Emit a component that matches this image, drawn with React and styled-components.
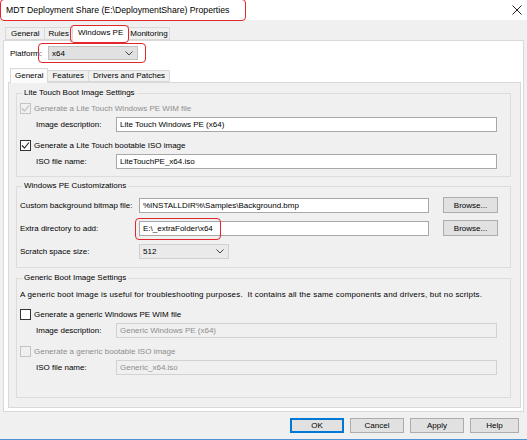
import React from 'react';
import styled, { createGlobalStyle } from 'styled-components';

const GlobalStyle = createGlobalStyle`
  html, body { margin: 0; padding: 0; background: #f0f0f0; }
  body { font-family: "Liberation Sans", Arial, sans-serif; font-size: 8px; color: #000; }
  * { box-sizing: border-box; }
`;

const Window = styled.div`
  width: 527px;
  height: 440px;
  background: #f0f0f0;
  display: flex;
  flex-direction: column;
  border-bottom: 1px solid #4d94d4;
  overflow: hidden;
`;

const TitleBar = styled.div`
  height: 20px;
  flex-shrink: 0;
  background: #fff;
  display: flex;
  align-items: center;
  justify-content: space-between;
  padding: 0 5px 0 6px;
`;

const Title = styled.span`
  font-size: 8.7px;
  line-height: 12px;
`;

const Highlight = styled.span`
  position: relative;
  display: inline-flex;
  align-items: center;
  &::after {
    content: '';
    position: absolute;
    top: ${p => p.$t}px;
    right: ${p => p.$r}px;
    bottom: ${p => p.$b}px;
    left: ${p => p.$l}px;
    border: 1.6px solid #e3262b;
    border-radius: 4px;
    pointer-events: none;
    z-index: 5;
  }
`;

const TabStrip = styled.div`
  display: flex;
  align-items: flex-end;
  height: ${p => p.$h}px;
  padding-left: ${p => p.$pl}px;
  position: relative;
  z-index: 2;
  flex-shrink: 0;
`;

const Tab = styled.div`
  height: ${p => (p.$active ? p.$h + 3 : p.$h)}px;
  margin-bottom: ${p => (p.$active ? -1 : 0)}px;
  padding: 0 ${p => p.$px}px;
  display: flex;
  align-items: center;
  justify-content: center;
  background: ${p => (p.$active ? p.$activeBg : '#f0f0f0')};
  border: 1px solid #d9d9d9;
  border-bottom: ${p => (p.$active ? 'none' : '1px solid #d9d9d9')};
  margin-left: -1px;
  white-space: nowrap;
  line-height: 10px;
  padding-bottom: ${p => (p.$active ? 1 : 0)}px;
  position: relative;
  z-index: ${p => (p.$active ? 3 : 1)};
  &:first-child { margin-left: 0; }
`;

const Page = styled.div`
  margin: 0 3px 0 3px;
  height: 372px;
  background: #fff;
  border: 1px solid #d9d9d9;
  display: flex;
  flex-direction: column;
  flex-shrink: 0;
`;

const PlatformRow = styled.div`
  display: flex;
  align-items: center;
  margin-top: 5px;
  padding-left: 6px;
  height: 14px;
`;

const PlatformLabel = styled.span`
  width: 38px;
  white-space: nowrap;
  overflow: hidden;
`;

const Combo = styled.div`
  width: ${p => p.$w}px;
  height: ${p => p.$h}px;
  background: ${p => p.$bg};
  border: 1px solid ${p => p.$bd};
  display: flex;
  align-items: center;
  justify-content: space-between;
  padding: 0 4px 0 3px;
`;

const InnerTabs = styled.div`
  margin: 8px 2px 3px 4px;
  flex: 1;
  display: flex;
  flex-direction: column;
`;

const InnerPanel = styled.div`
  flex: 1;
  background: #f0f0f0;
  border: 1px solid #d9d9d9;
  padding: 5px 9px 7px 7px;
  display: flex;
  flex-direction: column;
  gap: ${p => p.$gap}px;
`;

const Group = styled.fieldset`
  margin: 0;
  margin-top: ${p => p.$mt || 0}px;
  border: 1px solid #dcdcdc;
  padding: ${p => p.$pt}px 13px ${p => p.$pb}px 3px;
  min-width: 0;
  display: flex;
  flex-direction: column;
`;

const Legend = styled.legend`
  padding: 0 2px;
  margin-left: 2px;
  line-height: 10px;
  height: 10px;
`;

const Row = styled.div`
  display: flex;
  align-items: center;
  height: ${p => p.$h}px;
  margin-top: ${p => p.$mt || 0}px;
  padding-left: ${p => p.$indent || 0}px;
  color: ${p => (p.$disabled ? '#8d8d8d' : '#000')};
  white-space: nowrap;
`;

const Label = styled.span`
  width: ${p => p.$w}px;
  flex-shrink: 0;
`;

const TextBox = styled.div`
  flex: ${p => (p.$w ? '0 0 auto' : 1)};
  width: ${p => (p.$w ? `${p.$w}px` : 'auto')};
  height: 15px;
  background: ${p => (p.$disabled ? '#f0f0f0' : '#fff')};
  border: 1px solid ${p => (p.$disabled ? '#d2d2d2' : '#a8a8a8')};
  color: ${p => (p.$disabled ? '#8d8d8d' : '#000')};
  padding-left: 3px;
  display: flex;
  align-items: center;
  white-space: nowrap;
  overflow: hidden;
`;

const CheckBox = styled.span`
  width: 11px;
  height: 11px;
  flex-shrink: 0;
  border: 1px solid ${p => (p.$disabled ? '#c4c4c4' : '#333')};
  background: ${p => (p.$disabled ? '#f0f0f0' : '#fff')};
  margin-right: 3px;
  display: flex;
  align-items: center;
  justify-content: center;
`;

const Button = styled.div`
  width: ${p => p.$w}px;
  height: ${p => p.$h}px;
  background: #e1e1e1;
  border: 1px solid ${p => (p.$default ? '#0078d7' : '#adadad')};
  box-shadow: ${p => (p.$default ? 'inset 0 0 0 1px #0078d7' : 'none')};
  display: flex;
  align-items: center;
  justify-content: center;
  flex-shrink: 0;
`;

const BrowseButton = styled(Button)`
  margin-left: 14px;
`;

const ButtonRow = styled.div`
  display: flex;
  justify-content: flex-end;
  gap: 6px;
  margin-top: 6px;
  padding-right: 8px;
`;

const Description = styled.div`
  height: 12px;
  line-height: 12px;
  white-space: nowrap;
  letter-spacing: 0.17px;
`;

const Chevron = () => (
  <svg width="8" height="5" viewBox="0 0 8 5">
    <polyline points="0.5,0.5 4,4 7.5,0.5" fill="none" stroke="#444" strokeWidth="1" />
  </svg>
);

const CloseIcon = () => (
  <svg width="10" height="10" viewBox="0 0 10 10">
    <path d="M0.5 0.5 L9.5 9.5 M9.5 0.5 L0.5 9.5" stroke="#222" strokeWidth="1" />
  </svg>
);

const Check = ({ color }) => (
  <svg width="9" height="9" viewBox="0 0 9 9">
    <polyline points="1,4.5 3.5,7 8,1.5" fill="none" stroke={color} strokeWidth="1.1" />
  </svg>
);

const Checkbox = ({ checked, disabled, children }) => (
  <>
    <CheckBox $disabled={disabled}>{checked && <Check color={disabled ? '#b8b8b8' : '#222'} />}</CheckBox>
    {children}
  </>
);

export default function App() {
  return (
    <>
      <GlobalStyle />
      <Window>
        <TitleBar>
          <Highlight $t={-5} $r={-17} $b={-5} $l={-6}>
            <Title>MDT Deployment Share (E:\DeploymentShare) Properties</Title>
          </Highlight>
          <CloseIcon />
        </TitleBar>

        <TabStrip $h={20} $pl={5}>
          <Tab $h={13} $px={5} $activeBg="#fff">General</Tab>
          <Tab $h={13} $px={3} $activeBg="#fff">Rules</Tab>
          <Tab $h={13} $px={5} $active $activeBg="#fff">
            <Highlight $t={-3} $r={-6} $b={-5} $l={-8}>Windows PE</Highlight>
          </Tab>
          <Tab $h={13} $px={1} $activeBg="#fff">Monitoring</Tab>
        </TabStrip>

        <Page>
          <PlatformRow>
            <PlatformLabel>Platform:</PlatformLabel>
            <Highlight $t={-3} $r={-8} $b={-3} $l={-10}>
              <Combo $w={90} $h={14} $bg="#e1e1e1" $bd="#c2c2c2">
                x64
                <Chevron />
              </Combo>
            </Highlight>
          </PlatformRow>

          <InnerTabs>
            <TabStrip $h={14} $pl={2}>
              <Tab $h={12} $px={4} $active $activeBg="#fbfbfb">General</Tab>
              <Tab $h={12} $px={4} $activeBg="#fff">Features</Tab>
              <Tab $h={12} $px={4} $activeBg="#fff">Drivers and Patches</Tab>
            </TabStrip>
            <InnerPanel $gap={4}>
              <Group $pt={4} $pb={7}>
                <Legend>Lite Touch Boot Image Settings</Legend>
                <Row $h={12} $disabled>
                  <Checkbox checked disabled>Generate a Lite Touch Windows PE WIM file</Checkbox>
                </Row>
                <Row $h={15} $mt={3} $indent={16}>
                  <Label $w={80}>Image description:</Label>
                  <TextBox>Lite Touch Windows PE (x64)</TextBox>
                </Row>
                <Row $h={12} $mt={7}>
                  <Checkbox checked>Generate a Lite Touch bootable ISO image</Checkbox>
                </Row>
                <Row $h={15} $mt={3} $indent={16}>
                  <Label $w={80}>ISO file name:</Label>
                  <TextBox>LiteTouchPE_x64.iso</TextBox>
                </Row>
              </Group>

              <Group $pt={6} $pb={8}>
                <Legend>Windows PE Customizations</Legend>
                <Row $h={16}>
                  <Label $w={119}>Custom background bitmap file:</Label>
                  <TextBox $w={290}>%INSTALLDIR%\Samples\Background.bmp</TextBox>
                  <BrowseButton $w={55} $h={16}>Browse...</BrowseButton>
                </Row>
                <Row $h={16} $mt={7}>
                  <Label $w={119}>Extra directory to add:</Label>
                  <Highlight $t={-3} $r={208} $b={-4} $l={-4}>
                    <TextBox $w={290}>E:\_extraFolder\x64</TextBox>
                  </Highlight>
                  <BrowseButton $w={55} $h={16}>Browse...</BrowseButton>
                </Row>
                <Row $h={16} $mt={7}>
                  <Label $w={119}>Scratch space size:</Label>
                  <Combo $w={90} $h={15} $bg="#eaeaea" $bd="#d0d0d0">
                    512
                    <Chevron />
                  </Combo>
                </Row>
              </Group>

              <Group $pt={6} $pb={22} $mt={1}>
                <Legend>Generic Boot Image Settings</Legend>
                <Description>
                  A generic boot image is useful for troubleshooting purposes.&nbsp; It contains all the same components and drivers, but no scripts.
                </Description>
                <Row $h={12} $mt={7}>
                  <Checkbox>Generate a generic Windows PE WIM file</Checkbox>
                </Row>
                <Row $h={15} $mt={3} $indent={16}>
                  <Label $w={80}>Image description:</Label>
                  <TextBox $disabled>Generic Windows PE (x64)</TextBox>
                </Row>
                <Row $h={12} $mt={7} $disabled>
                  <Checkbox disabled>Generate a generic bootable ISO image</Checkbox>
                </Row>
                <Row $h={15} $mt={3} $indent={16}>
                  <Label $w={80}>ISO file name:</Label>
                  <TextBox $disabled>Generic_x64.iso</TextBox>
                </Row>
              </Group>
            </InnerPanel>
          </InnerTabs>
        </Page>

        <ButtonRow>
          <Button $w={54} $h={15} $default>OK</Button>
          <Button $w={54} $h={15}>Cancel</Button>
          <Button $w={54} $h={15}>Apply</Button>
          <Button $w={49} $h={15}>Help</Button>
        </ButtonRow>
      </Window>
    </>
  );
}
